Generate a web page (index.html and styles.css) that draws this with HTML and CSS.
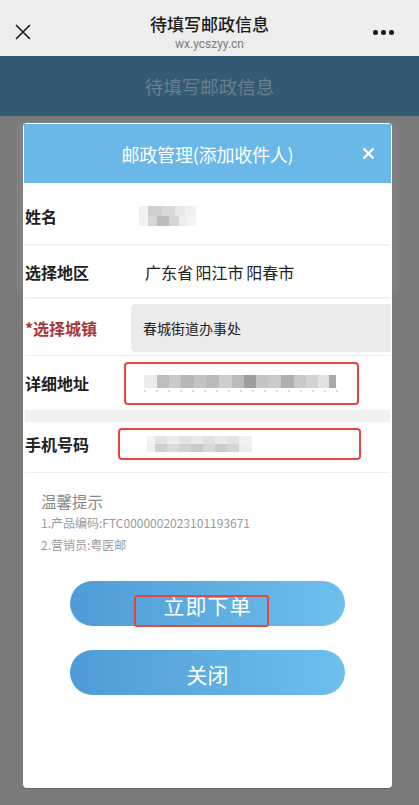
FILE: index.html
```html
<!DOCTYPE html>
<html lang="zh-CN">
<head>
<meta charset="utf-8">
<title>待填写邮政信息</title>
<link rel="stylesheet" href="styles.css">
</head>
<body>
<div class="topbar">
  <div class="tb-close">
    <svg width="16" height="16" viewBox="0 0 16 16"><path d="M1 1L15 15M15 1L1 15" stroke="#1a1a1a" stroke-width="1.6" fill="none"/></svg>
  </div>
  <div class="tb-center">
    <div class="tb-title">待填写邮政信息</div>
    <div class="tb-url">wx.ycszyy.cn</div>
  </div>
  <div class="tb-more"><span></span><span></span><span></span></div>
</div>
<div class="page-header">待填写邮政信息</div>
<div class="stage">
  <div class="bg-card"></div>
  <div class="modal">
    <div class="modal-head">
      <div class="modal-title">邮政管理(添加收件人)</div>
      <svg class="modal-x" width="13" height="13" viewBox="0 0 13 13"><path d="M1.5 1.5L11.5 11.5M11.5 1.5L1.5 11.5" stroke="#fff" stroke-width="2.4" fill="none"/></svg>
    </div>
    <div class="row row-name">
      <div class="label">姓名</div>
      <div class="mosaic mosaic-name"></div>
    </div>
    <div class="row row-region">
      <div class="label">选择地区</div>
      <div class="value">广东省 阳江市 阳春市</div>
    </div>
    <div class="row row-town">
      <div class="label label-req">*选择城镇</div>
      <div class="town-box">春城街道办事处</div>
    </div>
    <div class="row row-addr">
      <div class="label">详细地址</div>
      <div class="mark-box addr-box"><div class="mosaic mosaic-addr"></div></div>
    </div>
    <div class="strip"></div>
    <div class="row row-phone">
      <div class="label">手机号码</div>
      <div class="mark-box phone-box"><div class="mosaic mosaic-phone"></div></div>
    </div>
    <div class="tips">
      <div class="tips-title">温馨提示</div>
      <div class="tips-line">1.产品编码:FTC0000002023101193671</div>
      <div class="tips-line">2.营销员:粤医邮</div>
    </div>
    <div class="btns">
      <div class="btn btn-order">立即下单<span class="btn-mark"></span></div>
      <div class="btn">关闭</div>
    </div>
  </div>
</div>
</body>
</html>
```
FILE: styles.css
```css
* { box-sizing: border-box; }
body {
  margin: 0;
  width: 419px;
  height: 805px;
  overflow: hidden;
  font-family: "Noto Sans CJK SC", "Noto Sans", sans-serif;
  background: #7a7a7a;
}
.topbar {
  height: 56px;
  background: #ededed;
  display: grid;
  grid-template-columns: 46px 1fr 46px;
}
.tb-close {
  display: flex;
  justify-content: center;
  padding-top: 24px;
}
.tb-center {
  text-align: center;
  padding-top: 14px;
}
.tb-title {
  font-size: 17px;
  line-height: 20px;
  height: 20px;
  font-weight: 500;
  color: #1a1a1a;
}
.tb-url {
  margin-top: 4px;
  font-size: 12px;
  line-height: 12px;
  height: 12px;
  color: #7c7c7c;
  font-family: Roboto, "Liberation Sans", sans-serif;
}
.tb-more {
  display: flex;
  gap: 3.5px;
  padding-top: 30px;
}
.tb-more span {
  width: 4.5px;
  height: 4.5px;
  border-radius: 50%;
  background: #1a1a1a;
}
.page-header {
  height: 60px;
  background: #335a73;
  color: #6a7e8c;
  font-size: 18.5px;
  line-height: 60px;
  text-align: center;
}
.stage {
  position: relative;
  height: 689px;
  background: #7a7a7a;
  padding-top: 5px;
}
.bg-card {
  margin-left: 16px;
  margin-right: 20px;
  height: 174px;
  background: #808080;
  border-radius: 9px;
}
.modal {
  position: absolute;
  top: 7px;
  left: 23px;
  width: 369px;
  height: 665px;
  background: #fff;
  border-radius: 4px;
  padding: 1px 1px 0;
  box-shadow: 0 1px 1px rgba(0,0,0,0.15);
}
.modal-head {
  position: relative;
  height: 59px;
  background: #6ab8e8;
  display: flex;
  align-items: center;
  justify-content: center;
}
.modal-title {
  color: #fff;
  font-size: 18px;
  letter-spacing: -0.2px;
}
.modal-x {
  position: absolute;
  right: 16px;
  top: 23px;
}
.row {
  display: flex;
  align-items: center;
  margin: 0 1px;
}
.label {
  width: 93px;
  font-size: 16px;
  font-weight: 700;
  color: #222;
  flex: none;
}
.row-name {
  height: 63px;
  padding-top: 4px;
  border-bottom: 2px solid #f0f0f0;
}
.mosaic-name {
  margin-left: 21px;
  width: 57px;
  height: 20px;
  background:
    linear-gradient(to right, #f2f2f2 0 9px, #cfcfcf 9px 23px, #d9d9d9 23px 36px, #e7e7e7 36px 46px, #f0f0f0 46px) top / 100% 10px no-repeat,
    linear-gradient(to right, #f0f0f0 0 9px, #d6d6d6 9px 18px, #bcbcbc 18px 30px, #d4d4d4 30px 40px, #ececec 40px 48px, #f4f4f4 48px) bottom / 100% 10px no-repeat;
}
.row-region {
  height: 53px;
  border-bottom: 2px solid #f0f0f0;
}
.value {
  margin-left: 27px;
  font-size: 16px;
  color: #222;
  word-spacing: -1px;
}
.row-town {
  height: 57px;
  margin-right: 0;
  padding-top: 2px;
  border-bottom: 1px solid #ededed;
}
.label-req {
  color: #a3383b;
}
.town-box {
  margin-left: 13px;
  flex: 1;
  height: 48px;
  background: #ebebeb;
  border-radius: 5px 0 0 5px;
  display: flex;
  align-items: center;
  padding-left: 12px;
  font-size: 14px;
  color: #222;
}
.row-addr {
  height: 52px;
  padding-top: 2px;
}
.mark-box {
  border: 2px solid #e8463d;
  border-radius: 4px;
  display: flex;
  align-items: center;
}
.addr-box {
  margin-left: 6px;
  width: 235px;
  height: 43px;
  padding-left: 18px;
}
.mosaic-addr {
  width: 197px;
  height: 17px;
  background:
    linear-gradient(to right, #ececec 0 13px, #bdbdbd 13px 25px, #cacaca 25px 37px, #b7b7b7 37px 50px, #c3c3c3 50px 62px, #b9b9b9 62px 75px, #cdcdcd 75px 88px, #bbbbbb 88px 100px, #9e9e9e 100px 112px, #c4c4c4 112px 124px, #c9c9c9 124px 137px, #afafaf 137px 150px, #c8c8c8 150px 162px, #d3d3d3 162px 174px, #e2e2e2 174px 185px, #a9a9a9 185px 192px, #fff 192px) top / 100% 13px no-repeat,
    repeating-linear-gradient(to right, #d8d8d8 0 2px, #fff 2px 12px) bottom / 100% 2px no-repeat;
}
.strip {
  height: 12px;
  margin: 2px 1px 0 1px;
  background: #f1f1f1;
}
.row-phone {
  height: 51px;
  padding-bottom: 6px;
  border-bottom: 1px solid #eeeeee;
}
.phone-box {
  margin-left: 0;
  width: 243px;
  height: 32px;
  padding-left: 27px;
}
.mosaic-phone {
  width: 105px;
  height: 16px;
  background:
    linear-gradient(to right, #f3f3f3 0 8px, #e4e4e4 8px 20px, #ececec 20px 32px, #e2e2e2 32px 44px, #e9e9e9 44px 56px, #e0e0e0 56px 68px, #eaeaea 68px 80px, #e3e3e3 80px 92px, #f0f0f0 92px) top / 100% 8px no-repeat,
    linear-gradient(to right, #f0f0f0 0 8px, #cfcfcf 8px 20px, #dadada 20px 32px, #d2d2d2 32px 44px, #c9c9c9 44px 56px, #d8d8d8 56px 68px, #cbcbcb 68px 80px, #d5d5d5 80px 92px, #eeeeee 92px) bottom / 100% 8px no-repeat;
}
.tips {
  padding: 17px 0 0 17px;
}
.tips-title {
  font-size: 15.5px;
  line-height: 22px;
  color: #8a8a8a;
}
.tips-line {
  font-size: 12px;
  line-height: 22px;
  color: #9a9a9a;
}
.btns {
  display: flex;
  flex-direction: column;
  align-items: center;
  gap: 24px;
  margin-top: 25px;
}
.btn {
  position: relative;
  width: 275px;
  height: 45px;
  border-radius: 23px;
  background: linear-gradient(to right, #4f9bd6, #6dbfed);
  color: #fff;
  font-size: 21px;
  display: flex;
  align-items: center;
  justify-content: center;
  padding-top: 3px;
}
.btn-order { letter-spacing: 1px; }
.btn-mark {
  position: absolute;
  left: 64px;
  top: 14px;
  width: 135px;
  height: 32px;
  border: 2px solid #e8463d;
  border-radius: 3px;
}
```
